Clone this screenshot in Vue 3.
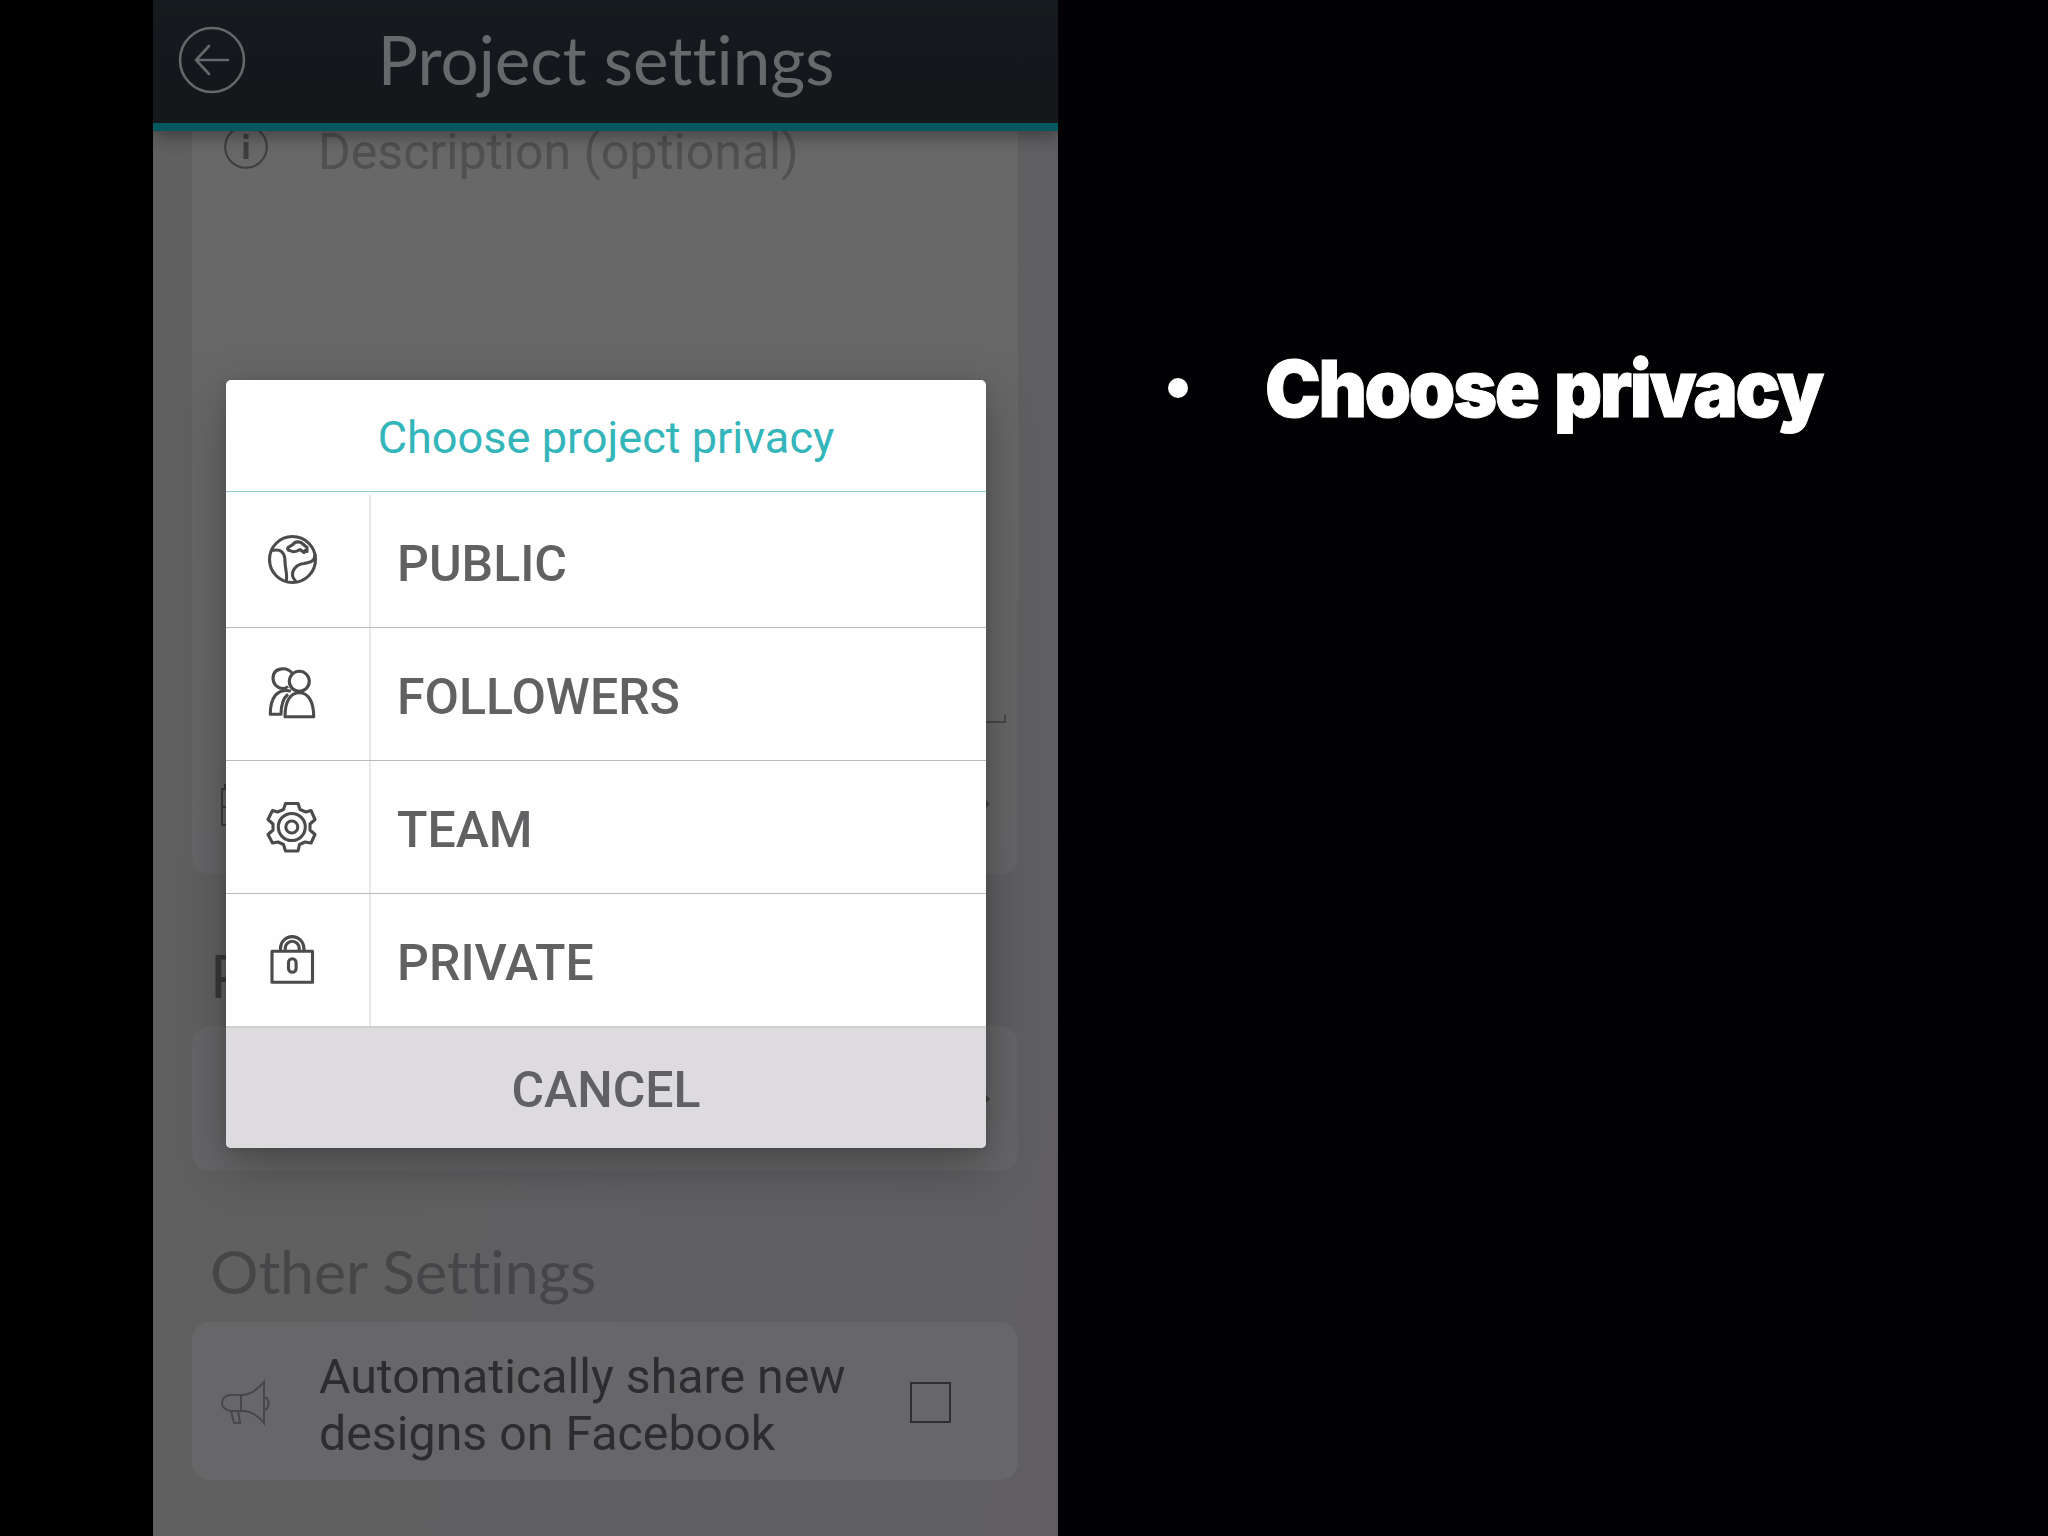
<template>
  <div class="stage">
    <div class="phone">
      <header class="header">
        <svg class="back" viewBox="0 0 68 68">
          <circle cx="34" cy="34" r="32" />
          <path d="M50 34H18M31 20L18 34l13 14" />
        </svg>
        <h1>Project settings</h1>
      </header>

      <main class="content">
        <section class="card description">
          <div class="row">
            <svg class="info" viewBox="0 0 44 44">
              <circle cx="22" cy="22" r="20.8" />
              <path d="M22 9v5M22 17v17" />
            </svg>
            <span class="placeholder">Description (optional)</span>
          </div>
          <div class="underline"></div>
          <div class="row date">
            <svg class="calendar" viewBox="0 0 44 44">
              <path d="M2 5h40v36H2zM2 23h40M5 0v5" />
            </svg>
            <i class="caret"></i>
          </div>
        </section>

        <h2 class="first">P</h2>
        <section class="card picker">
          <i class="caret"></i>
        </section>

        <h2 class="other">Other Settings</h2>
        <section class="card share">
          <svg class="horn" viewBox="0 0 48 44">
            <path d="M20 14H10C-2 14-2 29 10 30h10zM20 14C30 14 38 7 43 1v41C38 36 30 29 20 30M43 16c6 1 6 12 0 13M10 30l3 12h6l-2-12" />
          </svg>
          <p>Automatically share new designs on Facebook</p>
          <span class="checkbox"></span>
        </section>
      </main>

      <div class="dialog">
        <div class="dialog-title">Choose project privacy</div>
        <button v-for="option in options" :key="option.label" class="option">
          <span class="option-icon">
            <svg viewBox="0 0 50 50">
              <path v-for="d in option.paths" :key="d" :d="d" />
            </svg>
          </span>
          <span class="option-label">{{ option.label }}</span>
        </button>
        <button class="cancel">CANCEL</button>
      </div>
    </div>

    <div class="notes">
      <span class="bullet"></span>
      <span class="note">Choose privacy</span>
    </div>
  </div>
</template>

<script setup>
const options = [
  {
    label: 'PUBLIC',
    paths: [
      'M25.500 0.500a23 23 0 1 0 0 46a23 23 0 1 0 0-46z',
      'M5 14.500c9-2 13 2 13 11c0 8 3 13 1 20',
      'M48 18.500c0 7-5 8-11 9c-9 1-16 10-8 18',
      'M21 11.500c2-1 3-2 5-3c2-3 5-3 8-2l6 5v4l-2-1l-1 2l-4-3c-3 2-7 3-10 1c-2 0-3-2-2-3z'
    ]
  },
  {
    label: 'FOLLOWERS',
    paths: [
      'M25 4C19-3 6-1 6 9c0 6 4 10 9 10.500c3 0 5-1 6-2',
      'M32.300 2.300a10 10 0 1 0 0 20a10 10 0 1 0 0-20z',
      'M18 47.700h28.700C46.700 32 41 23.700 32.300 23.700C23.500 23.700 18 32 18 47.700z',
      'M24 22C9 19 3.300 30 3.300 45.300H14c0-8 1-15 7-20'
    ]
  },
  {
    label: 'TEAM',
    paths: [
      'M18.500 1.500h12.500l2 6l6 2.500l5-1.500l4 9l-5 4.500v6l5 4.500l-4 8.500l-6-1l-5.500 2.500l-1.500 6.500H18.500l-2-6.500l-5.500-2.500l-5.500 1l-4.500-8.500l5-4.500v-6l-5-4.500l4.500-9l5 1.500l6-2.500z',
      'M24.800 11.500a13.500 13.500 0 1 0 0 27a13.500 13.500 0 1 0 0-27z',
      'M24.800 19a6 6 0 1 0 0 12a6 6 0 1 0 0-12z'
    ]
  },
  {
    label: 'PRIVATE',
    paths: [
      'M5 16.300h40.500v31H5z',
      'M13.500 16.300v-3a11.700 11.700 0 0 1 23.400 0v3',
      'M18.200 16.300v-3a7 7 0 0 1 14 0v3',
      'M21.500 27.500a3.800 3.800 0 0 1 7.600 0v6a3.800 3.800 0 0 1-7.600 0z'
    ]
  }
]
</script>

<style>
body {
  margin: 0;
  background: #000;
}
</style>

<style scoped>
.stage {
  display: flex;
  width: 2048px;
  height: 1536px;
  padding-left: 153px;
  box-sizing: border-box;
  overflow: hidden;
  background: #000;
  font-family: Roboto, "Liberation Sans", sans-serif;
}

svg {
  display: block;
  fill: none;
  overflow: visible;
}

.phone {
  position: relative;
  width: 905px;
  height: 1536px;
  flex: none;
  overflow: hidden;
  background: linear-gradient(100deg, #606060, #605f61 50%, #605e61);
}

.header {
  position: relative;
  display: flex;
  align-items: center;
  height: 123px;
  padding-left: 25px;
  border-bottom: 8px solid #02585c;
  background: linear-gradient(#151b1e, #16171c 50%, #15171b);
  box-shadow: 0 4px 18px rgba(0, 0, 0, 0.4);
}

.back {
  width: 68px;
  height: 68px;
  margin-bottom: 3px;
  stroke: #66676b;
  stroke-width: 2.6;
  stroke-linecap: round;
}

h1,
h2 {
  margin: 0;
  font-family: Lato, sans-serif;
  font-weight: 400;
  font-variant-ligatures: none;
  white-space: nowrap;
}

h1 {
  flex: 1;
  margin: 0 92px 5px 0;
  text-align: center;
  font-size: 67.3px;
  line-height: 80px;
  color: #67686c;
}

.content {
  display: flex;
  flex-direction: column;
  padding: 0 40px 0 39px;
}

.card {
  box-sizing: border-box;
  border-radius: 18px;
  background: #676668;
}

.description {
  height: 743px;
  padding: 0 12px 0 32px;
  border-radius: 0 0 18px 18px;
  background: linear-gradient(#686868, #656466);
}

.row {
  display: flex;
}

.info {
  width: 44px;
  height: 44px;
  margin-top: -6px;
  stroke: #3e3e3f;
  stroke-width: 2;
}

.info path {
  stroke-width: 5;
}

.placeholder {
  margin: -9px 0 0 50px;
  font-size: 50px;
  line-height: 60px;
  color: #505051;
  white-space: nowrap;
}

.underline {
  height: 6px;
  margin: 533px 0 0 95px;
  border: 2px solid #464547;
  border-top: 0;
}

.date {
  justify-content: space-between;
  margin: 61px 16px 0 -4px;
}

.calendar {
  width: 44px;
  height: 44px;
  stroke: #3c3c3d;
  stroke-width: 2;
}

.caret {
  width: 0;
  height: 0;
  margin-top: 14px;
  border: 6px solid transparent;
  border-left-color: #3f3e40;
  border-right-width: 0;
}

.first {
  height: 152px;
  padding-left: 18px;
  box-sizing: border-box;
  padding-top: 65px;
  font-size: 60px;
  line-height: 72px;
  color: #383839;
}

.picker {
  display: flex;
  justify-content: flex-end;
  height: 145px;
  padding: 53px 28px 0 0;
  background: #656466;
}

.other {
  height: 151px;
  box-sizing: border-box;
  padding: 64px 0 0 18px;
  font-size: 60.6px;
  line-height: 72px;
  color: #464547;
}

.share {
  display: flex;
  align-items: center;
  height: 158px;
  padding: 0 67px 0 29px;
}

.horn {
  width: 48px;
  height: 44px;
  margin-top: 4px;
  stroke: #474648;
  stroke-width: 2;
}

.share p {
  width: 560px;
  margin: 7px 0 0 50px;
  font-size: 48.3px;
  line-height: 57px;
  color: #2d2c2e;
}

.checkbox {
  width: 41px;
  height: 41px;
  box-sizing: border-box;
  margin: 2px 0 0 auto;
  border: 2px solid #2f2e30;
}

.dialog {
  position: absolute;
  left: 73px;
  top: 380px;
  display: flex;
  flex-direction: column;
  width: 760px;
  height: 768px;
  border-radius: 5px;
  overflow: hidden;
  background: #fefefe;
  box-shadow: 0 20px 50px rgba(0, 0, 0, 0.26), 0 2px 12px rgba(0, 0, 0, 0.12);
}

.dialog-title {
  height: 111px;
  border-bottom: 1px solid #93ccd6;
  text-align: center;
  font-size: 45.1px;
  line-height: 115px;
  color: #34b5ba;
}

button {
  margin: 0;
  padding: 0;
  border: 0;
  background: none;
  font-family: inherit;
  font-size: 50px;
  font-weight: 500;
  color: #616163;
}

.option {
  display: flex;
  height: 133px;
  flex: none;
  border-bottom: 1px solid #bbb9bc;
  text-align: left;
}

.option:nth-child(2) {
  height: 136px;
  padding-top: 3px;
  box-sizing: border-box;
}

.option:nth-child(5) {
  height: 132px;
  border-bottom: 0;
}

.option-icon {
  display: flex;
  align-items: center;
  width: 145px;
  height: 100%;
  padding: 0 0 0 41px;
  box-sizing: border-box;
  border-right: 2px solid #e9e7ea;
}

.option-icon svg {
  width: 50px;
  height: 50px;
  stroke: #4b4a4d;
  stroke-width: 3.1;
  stroke-linejoin: round;
}

.option-label {
  padding: 3px 0 0 26px;
  line-height: 132px;
}

.cancel {
  flex: 1;
  padding-top: 4px;
  border-top: 2px solid #d0ced1;
  background: #dddbde;
  text-align: center;
}

.notes {
  display: flex;
  align-items: flex-start;
  flex: 1;
  padding: 340px 0 0 110px;
  background: #020103;
}

.bullet {
  width: 20px;
  height: 20px;
  margin-top: 38px;
  border-radius: 50%;
  background: #fff;
}

.note {
  margin-left: 77px;
  font-family: Inter, sans-serif;
  font-size: 79px;
  font-weight: 900;
  line-height: 96px;
  letter-spacing: -2.5px;
  word-spacing: 4px;
  color: #fff;
  white-space: nowrap;
  transform: scaleX(0.945);
  transform-origin: left;
  -webkit-text-stroke: 1px #fff;
}
</style>
